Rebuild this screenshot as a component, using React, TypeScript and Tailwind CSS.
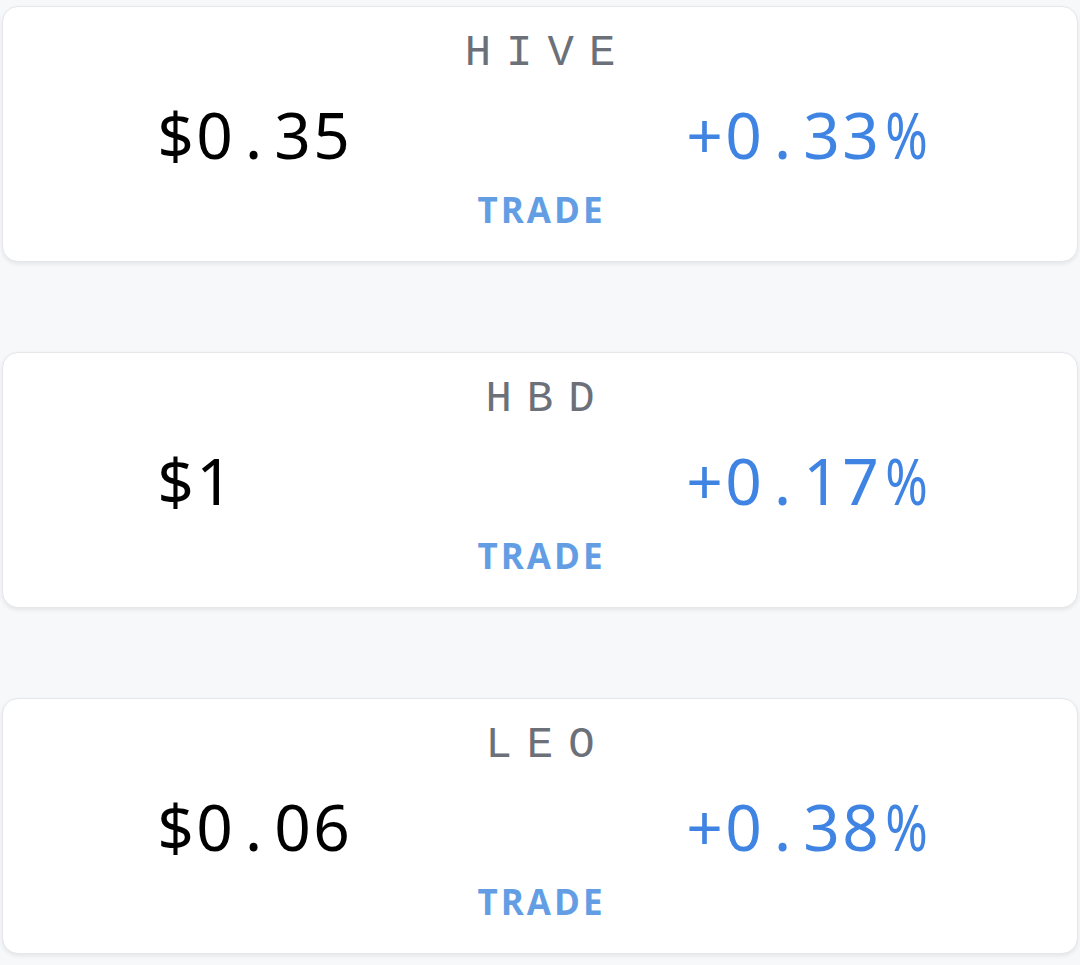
import React from "react";

const items = [
  { sym: "HIVE", price: "$0.35", change: "+0.33%" },
  { sym: "HBD", price: "$1", change: "+0.17%" },
  { sym: "LEO", price: "$0.06", change: "+0.38%" },
];

const mono = '"Liberation Mono", monospace';
const sans = '"Noto Sans", sans-serif';

function MonoText({ text, className }: { text: string; className: string }) {
  return (
    <span className={`flex ${className}`} style={{ fontFamily: sans }}>
      {text.split("").map((ch, i) => (
        <span key={i} className="inline-block w-[39px] text-center">
          {ch === "%" ? <span className="inline-block scale-x-[0.8]">%</span> : ch}
        </span>
      ))}
    </span>
  );
}

function Card({ sym, price, change }: { sym: string; price: string; change: string }) {
  return (
    <div className="flex flex-col items-center rounded-[16px] border border-[#e6e7ea] bg-white pt-[22px] pb-[31px] shadow-[0_2px_4px_rgba(0,0,0,0.08)]">
      <div
        className="h-[48px] pl-[15px] text-[44px] leading-[48px] tracking-[15px] text-[#6b7079]"
        style={{ fontFamily: mono }}
      >
        {sym}
      </div>
      <div className="mt-[26px] flex h-[64px] w-full items-center justify-between pl-[153px] pr-[158px] text-[64px] leading-[64px]">
        <MonoText text={price} className="text-black" />
        <MonoText text={change} className="text-[#3f84e3]" />
      </div>
      <div
        className="mt-[23px] h-[40px] pl-[3px] text-[35px] font-bold leading-[40px] tracking-[3px] text-[#639ee4]"
        style={{ fontFamily: '"Open Sans", sans-serif' }}
      >
        TRADE
      </div>
    </div>
  );
}

export default function App() {
  return (
    <div className="min-h-[965px] bg-[#f7f8fa] px-[2px] pt-[6px]">
      <div className="flex flex-col gap-[90px]">
        {items.map((it) => (
          <Card key={it.sym} {...it} />
        ))}
      </div>
    </div>
  );
}
